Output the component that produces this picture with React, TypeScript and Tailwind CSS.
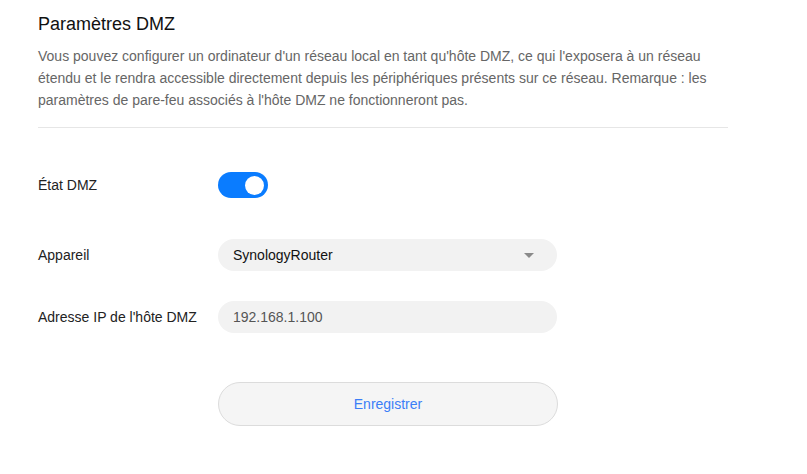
import React from 'react';

export default function App() {
  return (
    <div className="min-h-[474px] w-[807px] bg-white font-['Liberation_Sans',Arial,sans-serif]">
      <div className="ml-[38px] w-[690px] pt-[12px]">
        {/* Header */}
        <h2 className="text-[18px] leading-[24px] text-[#111]">Paramètres DMZ</h2>
        <p className="mt-[9px] text-[14px] leading-[22px] text-[#666]">
          Vous pouvez configurer un ordinateur d'un réseau local en tant qu'hôte DMZ, ce qui l'exposera à un réseau
          étendu et le rendra accessible directement depuis les périphériques présents sur ce réseau. Remarque : les
          paramètres de pare-feu associés à l'hôte DMZ ne fonctionneront pas.
        </p>
        <div className="mt-[16px] h-px bg-[#e6e6e6]" />

        {/* Form */}
        <div className="mt-[44px] flex items-center">
          <span className="w-[180px] text-[14px] text-[#222]">État DMZ</span>
          <button className="flex h-[26px] w-[50px] items-center justify-end rounded-full bg-[#0a7cff] pr-[4px]">
            <span className="h-[19px] w-[19px] rounded-full bg-white" />
          </button>
        </div>

        <div className="mt-[41px] flex items-center">
          <span className="w-[180px] text-[14px] text-[#222]">Appareil</span>
          <div className="flex h-[32px] w-[339px] items-center justify-between rounded-full bg-[#f2f2f2] pl-[15px] pr-[23px]">
            <span className="text-[14px] text-[#111]">SynologyRouter</span>
            <span className="h-0 w-0 border-x-[5px] border-t-[5px] border-x-transparent border-t-[#8a8a8a]" />
          </div>
        </div>

        <div className="mt-[30px] flex items-center">
          <span className="w-[180px] text-[14px] text-[#222]">Adresse IP de l'hôte DMZ</span>
          <div className="flex h-[32px] w-[339px] items-center rounded-full bg-[#f2f2f2] pl-[15px]">
            <span className="text-[14px] text-[#555]">192.168.1.100</span>
          </div>
        </div>

        <div className="mt-[49px] flex">
          <div className="w-[180px]" />
          <button className="h-[44px] w-[340px] rounded-full border border-[#dcdcdc] bg-[#f5f5f5] text-[14px] text-[#3b7ef7]">
            Enregistrer
          </button>
        </div>
      </div>
    </div>
  );
}
